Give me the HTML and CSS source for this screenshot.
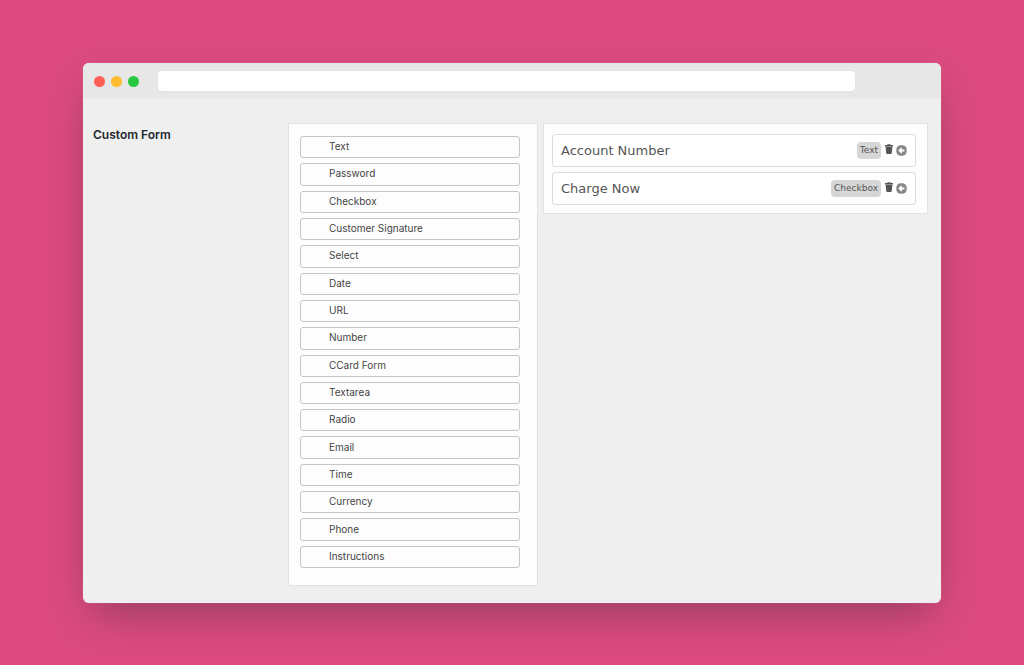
FILE: index.html
```
<!DOCTYPE html>
<html lang="en">
<head>
<meta charset="utf-8">
<title>Custom Form</title>
<link rel="stylesheet" href="styles.css">
</head>
<body>
<div class="window">
  <header class="toolbar">
    <span class="dot dot-close"></span>
    <span class="dot dot-minimize"></span>
    <span class="dot dot-expand"></span>
    <input class="address" type="text" aria-label="Address">
  </header>
  <main class="builder">
    <h1 class="title">Custom Form</h1>
    <div class="palette">
      <button class="field-type" type="button">Text</button>
      <button class="field-type" type="button">Password</button>
      <button class="field-type" type="button">Checkbox</button>
      <button class="field-type" type="button">Customer Signature</button>
      <button class="field-type" type="button">Select</button>
      <button class="field-type" type="button">Date</button>
      <button class="field-type" type="button">URL</button>
      <button class="field-type" type="button">Number</button>
      <button class="field-type" type="button">CCard Form</button>
      <button class="field-type" type="button">Textarea</button>
      <button class="field-type" type="button">Radio</button>
      <button class="field-type" type="button">Email</button>
      <button class="field-type" type="button">Time</button>
      <button class="field-type" type="button">Currency</button>
      <button class="field-type" type="button">Phone</button>
      <button class="field-type" type="button">Instructions</button>
    </div>
    <div class="canvas">
      <div class="field">
        <span class="field-name">Account Number</span>
        <span class="badge">Text</span>
        <button class="icon-button trash" type="button" aria-label="Delete Account Number">
          <svg width="8" height="10" viewBox="0 0 8 10"><path d="M0 1h2.4V.2h3.2V1H8v1.4H0z"/><path d="M.6 2.8h6.8l-.6 6.3q-.1.8-.9.8H2.1q-.8 0-.9-.8z"/></svg>
        </button>
        <button class="icon-button" type="button" aria-label="Open Account Number">
          <svg class="arrow" width="11" height="11" viewBox="0 0 11 11"><rect x=".3" y=".3" width="10.4" height="10.4" rx="4.4"/><path class="arrow-shape" d="M2.3 5.5 5 2.8h.9v1.7h2.500v2H5.900v1.700H5z"/></svg>
        </button>
      </div>
      <div class="field">
        <span class="field-name">Charge Now</span>
        <span class="badge">Checkbox</span>
        <button class="icon-button trash" type="button" aria-label="Delete Charge Now">
          <svg width="8" height="10" viewBox="0 0 8 10"><path d="M0 1h2.4V.2h3.2V1H8v1.4H0z"/><path d="M.6 2.8h6.8l-.6 6.3q-.1.8-.9.8H2.1q-.8 0-.9-.8z"/></svg>
        </button>
        <button class="icon-button" type="button" aria-label="Open Charge Now">
          <svg class="arrow" width="11" height="11" viewBox="0 0 11 11"><rect x=".3" y=".3" width="10.4" height="10.4" rx="4.4"/><path class="arrow-shape" d="M2.3 5.5 5 2.8h.9v1.7h2.500v2H5.900v1.700H5z"/></svg>
        </button>
      </div>
    </div>
  </main>
</div>
</body>
</html>
```
FILE: styles.css
```
* {
  box-sizing: border-box;
}

body {
  margin: 0;
  min-height: 100vh;
  padding: 63px 83px 62px;
  display: flex;
  background: #dd4b80;
  font-family: Inter, "Liberation Sans", sans-serif;
}

button {
  font-family: inherit;
  cursor: pointer;
}

.window {
  flex: 1;
  display: flex;
  flex-direction: column;
  border-radius: 6px;
  background: #efefef;
  box-shadow: 0 0 1px rgba(255, 255, 255, 0.5), 0 18px 40px -8px rgba(50, 40, 50, 0.42);
}

.toolbar {
  display: flex;
  align-items: center;
  gap: 6px;
  height: 36px;
  padding: 0 86px 0 11px;
  border-radius: 6px 6px 0 0;
  background: #e7e7e7;
}

.dot {
  width: 11px;
  height: 11px;
  border-radius: 50%;
}

.dot-close {
  background: #ff5f57;
}

.dot-minimize {
  background: #febc2e;
}

.dot-expand {
  background: #28c840;
}

.address {
  flex: 1;
  min-width: 0;
  height: 20px;
  margin-left: 13px;
  padding: 0 8px;
  border: 0;
  border-radius: 3px;
  background: #fff;
  box-shadow: 0 0 1px rgba(0, 0, 0, 0.15);
}

.builder {
  flex: 1;
  display: grid;
  grid-template-columns: 195px 250px 1fr;
  padding: 24px 13px 17px 10px;
}

.title {
  margin: 4px 0 0;
  color: #23282d;
  font-size: 12px;
  line-height: 16px;
  font-weight: 600;
}

.palette,
.canvas {
  border: 1px solid #e2e2e2;
  background: #fdfdfd;
}

.palette {
  display: grid;
  grid-auto-rows: 1fr;
  gap: 5px;
  padding: 12px 17px 17px 11px;
}

.field-type {
  padding: 0 28px 2px;
  border: 1px solid #c6c6c6;
  border-radius: 3px;
  background: #fdfdfd;
  color: #444;
  font-size: 10px;
  line-height: 18px;
  text-align: left;
}

.canvas {
  align-self: start;
  display: grid;
  gap: 5px;
  margin-left: 5px;
  padding: 10px 11px 8px 8px;
}

.field {
  display: flex;
  align-items: center;
  height: 33px;
  padding: 0 8px;
  border: 1px solid #dcdcdc;
  border-radius: 3px;
  background: #fff;
  color: #555;
  font-family: "DejaVu Sans", sans-serif;
}

.field-name {
  flex: 1;
  font-size: 13px;
}

.badge {
  padding: 0 3px;
  border-radius: 4px;
  background: #d6d6d6;
  font-size: 9px;
  line-height: 17px;
}

.icon-button {
  display: flex;
  margin-left: 3px;
  padding: 0;
  border: 0;
  background: none;
  fill: #555;
}

.trash {
  margin-left: 4px;
  padding-bottom: 4px;
}

.arrow {
  fill: #888;
}

.arrow-shape {
  fill: #fff;
}
```
